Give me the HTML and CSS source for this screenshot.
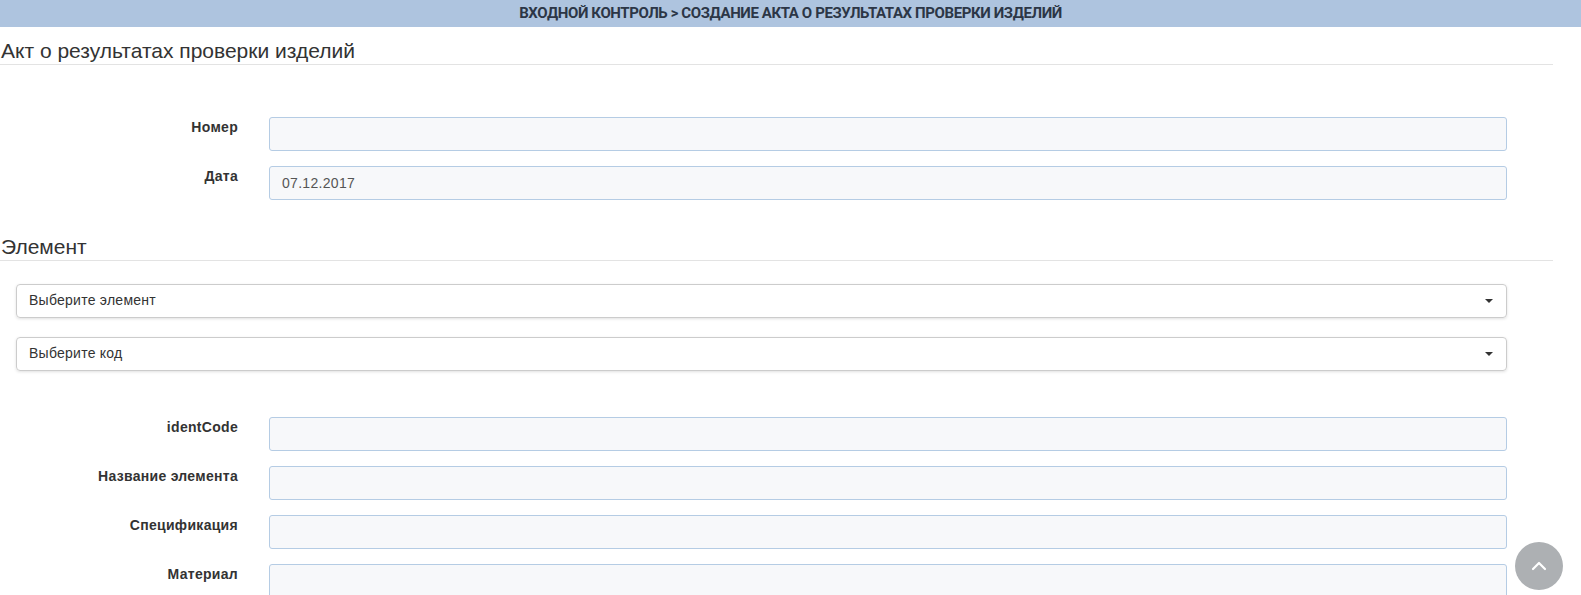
FILE: index.html
```html
<!DOCTYPE html>
<html lang="ru">
<head>
    <meta charset="UTF-8">
    <meta name="viewport" content="width=device-width, initial-scale=1.0">
    <title>Создание акта о результатах проверки изделий</title>
    <link rel="stylesheet" href="styles.css">
</head>
<body>
    <div class="breadcrumb-bar">
        <span class="breadcrumb-text">Входной контроль &gt; Создание акта о результатах проверки изделий</span>
    </div>

    <div class="page">
        <h3 class="section-title">Акт о результатах проверки изделий</h3>

        <form class="form-horizontal act-form">
            <div class="form-group">
                <label class="control-label">Номер</label>
                <input class="form-control" type="text">
            </div>
            <div class="form-group">
                <label class="control-label">Дата</label>
                <input class="form-control" type="text" value="07.12.2017">
            </div>
        </form>

        <h3 class="section-title">Элемент</h3>

        <div class="select-list">
            <div class="select-box">
                <span>Выберите элемент</span>
                <b class="caret"></b>
            </div>
            <div class="select-box">
                <span>Выберите код</span>
                <b class="caret"></b>
            </div>
        </div>

        <form class="form-horizontal element-form">
            <div class="form-group">
                <label class="control-label">identCode</label>
                <input class="form-control" type="text">
            </div>
            <div class="form-group">
                <label class="control-label">Название элемента</label>
                <input class="form-control" type="text">
            </div>
            <div class="form-group">
                <label class="control-label">Спецификация</label>
                <input class="form-control" type="text">
            </div>
            <div class="form-group">
                <label class="control-label">Материал</label>
                <input class="form-control" type="text">
            </div>
        </form>
    </div>

    <!-- back to top -->
    <a class="scroll-top" href="#">
        <svg width="20" height="20" viewBox="0 0 20 20">
            <path d="M4 13 L10 7 L16 13" fill="none" stroke="#fff" stroke-width="2.2" stroke-linecap="round" stroke-linejoin="round"/>
        </svg>
    </a>
</body>
</html>
```

FILE: styles.css
```css
* {
    box-sizing: border-box;
}

html, body {
    margin: 0;
    padding: 0;
}

body {
    font-family: 'Liberation Sans', Arial, sans-serif;
    font-size: 14px;
    line-height: 1.42857;
    color: #333;
    background: #fff;
    height: 595px;
    overflow: hidden;
}

.breadcrumb-bar {
    height: 27px;
    background: #aec4df;
    display: flex;
    align-items: center;
    justify-content: center;
}

.breadcrumb-text {
    font-family: 'Roboto', sans-serif;
    font-weight: 700;
    font-size: 15px;
    text-transform: uppercase;
    letter-spacing: -0.4px;
    color: #2c3646;
}

.page {
    width: 1553px;
}

.section-title {
    margin: 0;
    padding: 12px 0 1px 1px;
    font-size: 21px;
    font-weight: 400;
    line-height: 24px;
    color: #333;
    border-bottom: 1px solid #e3e3e3;
}

.form-group {
    display: grid;
    grid-template-columns: 238px 1238px;
    column-gap: 31px;
    margin-bottom: 15px;
}

.control-label {
    text-align: right;
    font-weight: 700;
    font-size: 14px;
    letter-spacing: 0.3px;
    padding-top: 1px;
}

.form-control {
    height: 34px;
    padding: 6px 12px;
    font-family: inherit;
    font-size: 14px;
    letter-spacing: 0.3px;
    color: #555;
    background: #f7f8fa;
    border: 1px solid #b5cce4;
    border-radius: 3px;
    outline: none;
}

.act-form {
    margin: 52px 0 0;
}

.act-form .form-group:last-child {
    margin-bottom: 23px;
}

.select-list {
    padding: 23px 0 0 16px;
    width: 1507px;
}

.select-box {
    height: 34px;
    display: flex;
    align-items: center;
    justify-content: space-between;
    padding: 0 12px;
    margin-bottom: 19px;
    border: 1px solid #ccc;
    border-radius: 4px;
    box-shadow: 0 1px 3px rgba(0, 0, 0, 0.12);
    font-size: 14px;
    letter-spacing: 0.25px;
    color: #333;
}

.caret {
    width: 0;
    height: 0;
    border-top: 4px solid #333;
    border-left: 4px solid transparent;
    border-right: 4px solid transparent;
    margin-right: 1px;
}

.element-form {
    margin: 0;
    padding-top: 27px;
}

.scroll-top {
    position: fixed;
    left: 1515px;
    top: 542px;
    width: 48px;
    height: 48px;
    border-radius: 50%;
    background: #adb0b3;
    display: flex;
    align-items: center;
    justify-content: center;
}
```
